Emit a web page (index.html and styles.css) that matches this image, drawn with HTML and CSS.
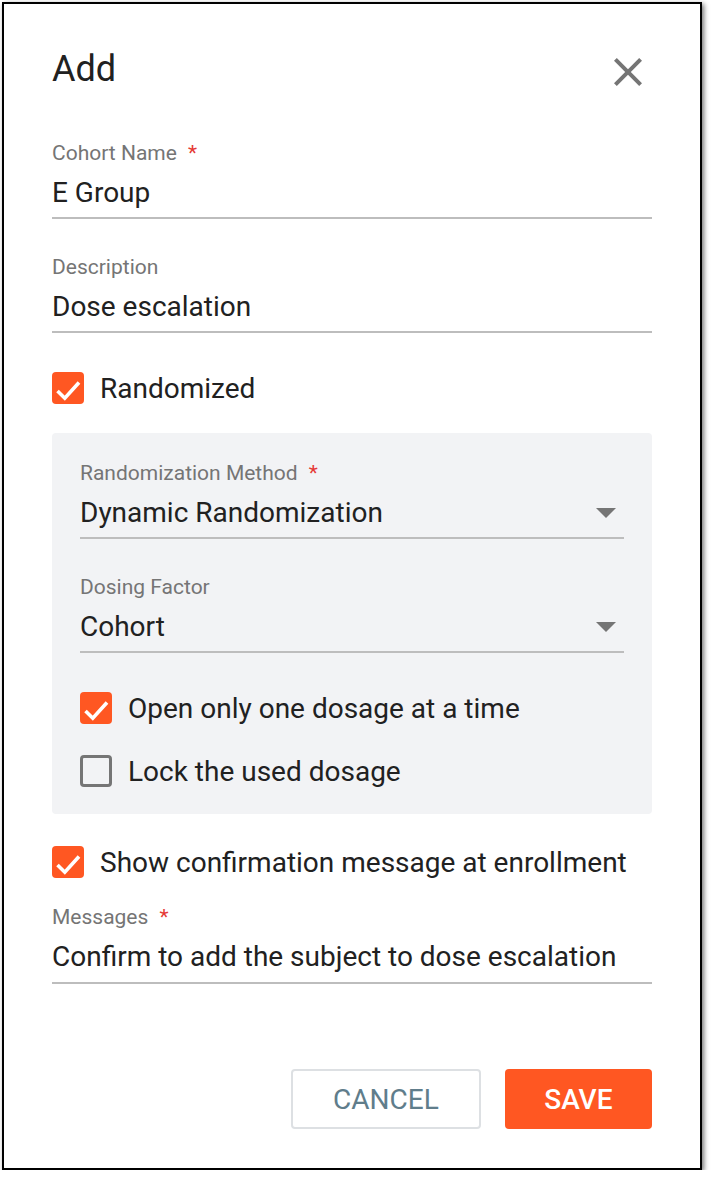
FILE: index.html
```html
<!DOCTYPE html>
<html lang="en">
<head>
<meta charset="utf-8">
<title>Add Cohort</title>
<link rel="stylesheet" href="styles.css">
</head>
<body>
<div class="dialog">
  <div class="header">
    <h1 class="title">Add</h1>
    <button class="close" aria-label="Close">
      <svg width="48" height="48" viewBox="0 0 48 48"><path d="M38 12.82L35.18 10 24 21.18 12.82 10 10 12.82 21.18 24 10 35.18 12.82 38 24 26.82 35.18 38 38 35.18 26.82 24z" fill="#757575"/></svg>
    </button>
  </div>

  <div class="field field-first">
    <div class="label">Cohort Name <span class="req">*</span></div>
    <div class="value">E Group</div>
  </div>

  <div class="field field-next">
    <div class="label">Description</div>
    <div class="value">Dose escalation</div>
  </div>

  <div class="check check-randomized">
    <span class="box checked"><svg width="32" height="32" viewBox="0 0 32 32"><polyline points="5.5,19 12.8,26.2 27,10.5" fill="none" stroke="#fff" stroke-width="3.6"/></svg></span>
    <span class="check-text">Randomized</span>
  </div>

  <div class="panel">
    <div class="field">
      <div class="label">Randomization Method <span class="req">*</span></div>
      <div class="value select">Dynamic Randomization<svg class="arrow" width="20" height="10" viewBox="0 0 20 10"><path d="M0 0L10 10 20 0z" fill="#757575"/></svg></div>
    </div>
    <div class="field field-next">
      <div class="label">Dosing Factor</div>
      <div class="value select">Cohort<svg class="arrow" width="20" height="10" viewBox="0 0 20 10"><path d="M0 0L10 10 20 0z" fill="#757575"/></svg></div>
    </div>
    <div class="check check-after-field">
      <span class="box checked"><svg width="32" height="32" viewBox="0 0 32 32"><polyline points="5.5,19 12.8,26.2 27,10.5" fill="none" stroke="#fff" stroke-width="3.6"/></svg></span>
      <span class="check-text">Open only one dosage at a time</span>
    </div>
    <div class="check check-next">
      <span class="box"></span>
      <span class="check-text">Lock the used dosage</span>
    </div>
  </div>

  <div class="check check-after-panel">
    <span class="box checked"><svg width="32" height="32" viewBox="0 0 32 32"><polyline points="5.5,19 12.8,26.2 27,10.5" fill="none" stroke="#fff" stroke-width="3.6"/></svg></span>
    <span class="check-text">Show confirmation message at enrollment</span>
  </div>

  <div class="field field-messages">
    <div class="label">Messages <span class="req">*</span></div>
    <div class="value">Confirm to add the subject to dose escalation</div>
  </div>

  <div class="actions">
    <button class="btn btn-cancel">CANCEL</button>
    <button class="btn btn-save">SAVE</button>
  </div>
</div>
</body>
</html>
```

FILE: styles.css
```css
* { box-sizing: border-box; }

html, body {
  margin: 0;
  padding: 0;
  background: #ffffff;
}

body {
  font-family: Roboto, "Liberation Sans", Arial, sans-serif;
  color: #212121;
}

.dialog {
  margin: 2px 0 0 2px;
  width: 700px;
  height: 1168px;
  border: 2px solid #000;
  box-shadow: 2px 2px 5px rgba(0, 0, 0, 0.55);
  background: #fff;
  padding: 44px 48px 39px 48px;
  display: flex;
  flex-direction: column;
}

.header {
  height: 48px;
  display: flex;
  justify-content: space-between;
  align-items: flex-start;
}

.title {
  margin: 0;
  font-size: 36px;
  font-weight: 400;
  line-height: 42px;
  color: #212121;
}

.close {
  width: 48px;
  height: 48px;
  padding: 0;
  border: none;
  background: transparent;
  display: block;
}
.close svg { display: block; }

.field {
  border-bottom: 2px solid #bdbdbd;
  padding-bottom: 7px;
}
.field-first { margin-top: 45px; }
.field-next { margin-top: 36px; }
.field-messages { margin-top: 27px; padding-bottom: 8px; }

.label {
  font-size: 21px;
  line-height: 24px;
  color: #757575;
  margin-bottom: 10px;
}

.req {
  color: #e53935;
  margin-left: 6px;
}

.value {
  font-size: 28px;
  line-height: 34px;
  padding-top: 1px;
  color: #212121;
}

.select {
  display: flex;
  justify-content: space-between;
  align-items: center;
}
.arrow {
  display: block;
  margin-right: 8px;
}

.check {
  display: flex;
  align-items: flex-start;
  gap: 16px;
  height: 32px;
}
.check-randomized { margin-top: 39px; }
.check-after-field { margin-top: 39px; }
.check-next { margin-top: 31px; }
.check-after-panel { margin-top: 32px; }

.box {
  width: 32px;
  height: 32px;
  flex: none;
  border-radius: 4px;
  border: 3px solid #757575;
  background: transparent;
  display: block;
}
.box.checked {
  border: none;
  background: #ff5722;
}
.box svg { display: block; }

.check-text {
  font-size: 28px;
  line-height: 32px;
  margin-top: 1px;
  color: #212121;
}

.panel {
  margin-top: 29px;
  background: #f2f3f5;
  border-radius: 4px;
  padding: 28px 28px 27px 28px;
}

.actions {
  margin-top: auto;
  display: flex;
  justify-content: flex-end;
  gap: 24px;
}

.btn {
  height: 60px;
  padding: 0 40px;
  font-family: Roboto, "Liberation Sans", Arial, sans-serif;
  font-size: 28px;
  border-radius: 4px;
  cursor: pointer;
}
.btn-cancel {
  background: #fff;
  border: 2px solid #dde0e3;
  color: #607d8b;
  font-weight: 400;
}
.btn-save {
  background: #ff5722;
  border: none;
  color: #fff;
  font-weight: 500;
  padding: 0 39.5px;
}
```
